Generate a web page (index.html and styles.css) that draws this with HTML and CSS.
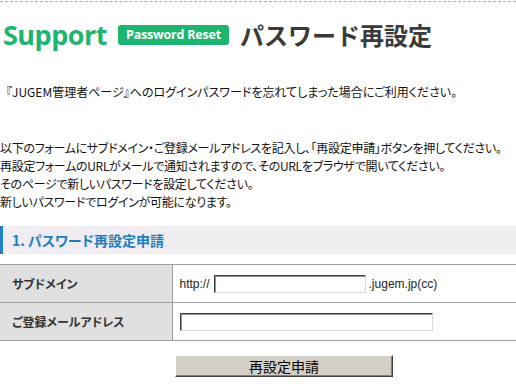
FILE: index.html
```html
<!DOCTYPE html>
<html lang="ja">
<head>
  <meta charset="UTF-8">
  <title>Support - Password Reset</title>
  <link rel="stylesheet" href="styles.css">
</head>
<body>
  <div class="page">
    <header class="title-bar">
      <span class="title-en">Support</span>
      <span class="badge">Password Reset</span>
      <h1 class="title-ja">パスワード再設定</h1>
    </header>

    <p class="lead">『JUGEM管理者ページ』へのログインパスワードを忘れてしまった場合にご利用ください。</p>

    <p class="guide">
      以下のフォームにサブドメイン・ご登録メールアドレスを記入し、「再設定申請」ボタンを押してください。<br>
      再設定フォームのURLがメールで通知されますので、そのURLをブラウザで開いてください。<br>
      そのページで新しいパスワードを設定してください。<br>
      新しいパスワードでログインが可能になります。
    </p>

    <h2 class="section">1. パスワード再設定申請</h2>

    <form class="reset-form">
      <table class="form-table">
        <tr>
          <th>サブドメイン</th>
          <td>
            <span class="url">http://</span><input type="text" class="field field-sub"><span class="url">.jugem.jp(cc)</span>
          </td>
        </tr>
        <tr>
          <th>ご登録メールアドレス</th>
          <td><input type="text" class="field field-mail"></td>
        </tr>
      </table>

      <div class="actions">
        <button type="button" class="submit">再設定申請</button>
      </div>
    </form>
  </div>
</body>
</html>
```

FILE: styles.css
```css
* {
  margin: 0;
  padding: 0;
  box-sizing: border-box;
}
html, body {
  background: #fff;
  overflow: hidden;
}
body {
  font-family: "Noto Sans CJK JP", sans-serif;
  font-size: 12px;
  line-height: 18px;
  color: #111;
  font-feature-settings: "palt";
}

/* Title */
.title-bar {
  margin-top: 1px;
  border-top: 1px dashed #aaa;
  display: flex;
  align-items: center;
  height: 53px;
  padding: 13px 0 0 3px;
}
.title-en {
  font-family: "Open Sans", sans-serif;
  font-weight: 700;
  font-size: 27px;
  letter-spacing: -0.5px;
  color: #1db56f;
  line-height: 1;
}
.badge {
  margin-left: 11px;
  background: #1db56f;
  color: #fff;
  font-family: "Open Sans", sans-serif;
  font-weight: 700;
  font-size: 12.5px;
  letter-spacing: -0.2px;
  line-height: 20px;
  padding: 0 8px;
  border-radius: 3px;
}
.title-ja {
  margin-left: 11px;
  font-size: 24px;
  font-weight: 700;
  color: #3a3a3a;
  line-height: 1;
  font-feature-settings: normal;
}

/* Text */
.lead {
  margin-top: 29px;
  padding-left: 6px;
}
.guide {
  margin-top: 38px;
  white-space: nowrap;
  letter-spacing: -0.3px;
}

/* Section heading */
.section {
  margin-top: 15px;
  height: 28px;
  line-height: 28px;
  background: #efedf1;
  border-left: 3px solid #2080c8;
  padding-left: 9px;
  font-size: 14px;
  font-weight: 700;
  color: #1f7ec0;
}

/* Form */
.form-table {
  margin-top: 10px;
  width: 100%;
  border-collapse: collapse;
}
.form-table th,
.form-table td {
  height: 38px;
  border-top: 1px solid #a0a0a0;
  border-bottom: 1px solid #a0a0a0;
  vertical-align: middle;
}
.form-table th {
  width: 172px;
  background: #e0e0e0;
  text-align: left;
  padding-left: 12px;
  font-weight: 700;
  color: #333;
  border-right: 1px solid #a0a0a0;
}
.form-table td {
  padding-left: 7px;
  color: #222;
}
.url {
  font-family: "Liberation Sans", sans-serif;
  font-size: 12px;
}
.field {
  height: 18px;
  vertical-align: middle;
  border: 1px solid;
  border-color: #404040 #d8d8d8 #d8d8d8 #404040;
  box-shadow: inset 1px 1px 0 #909090;
  background: #fff;
}
.field-sub {
  width: 152px;
  margin: 0 3px 0 4px;
}
.field-mail {
  width: 253px;
}

.actions {
  padding: 14px 0 0 175px;
}
.submit {
  width: 218px;
  height: 22px;
  background: #d4d0c8;
  border: 1px solid;
  border-color: #fff #404040 #404040 #fff;
  box-shadow: inset -1px -1px 0 #808080;
  font-family: "Noto Sans CJK JP", sans-serif;
  font-size: 14px;
  line-height: 18px;
  color: #000;
}
```
